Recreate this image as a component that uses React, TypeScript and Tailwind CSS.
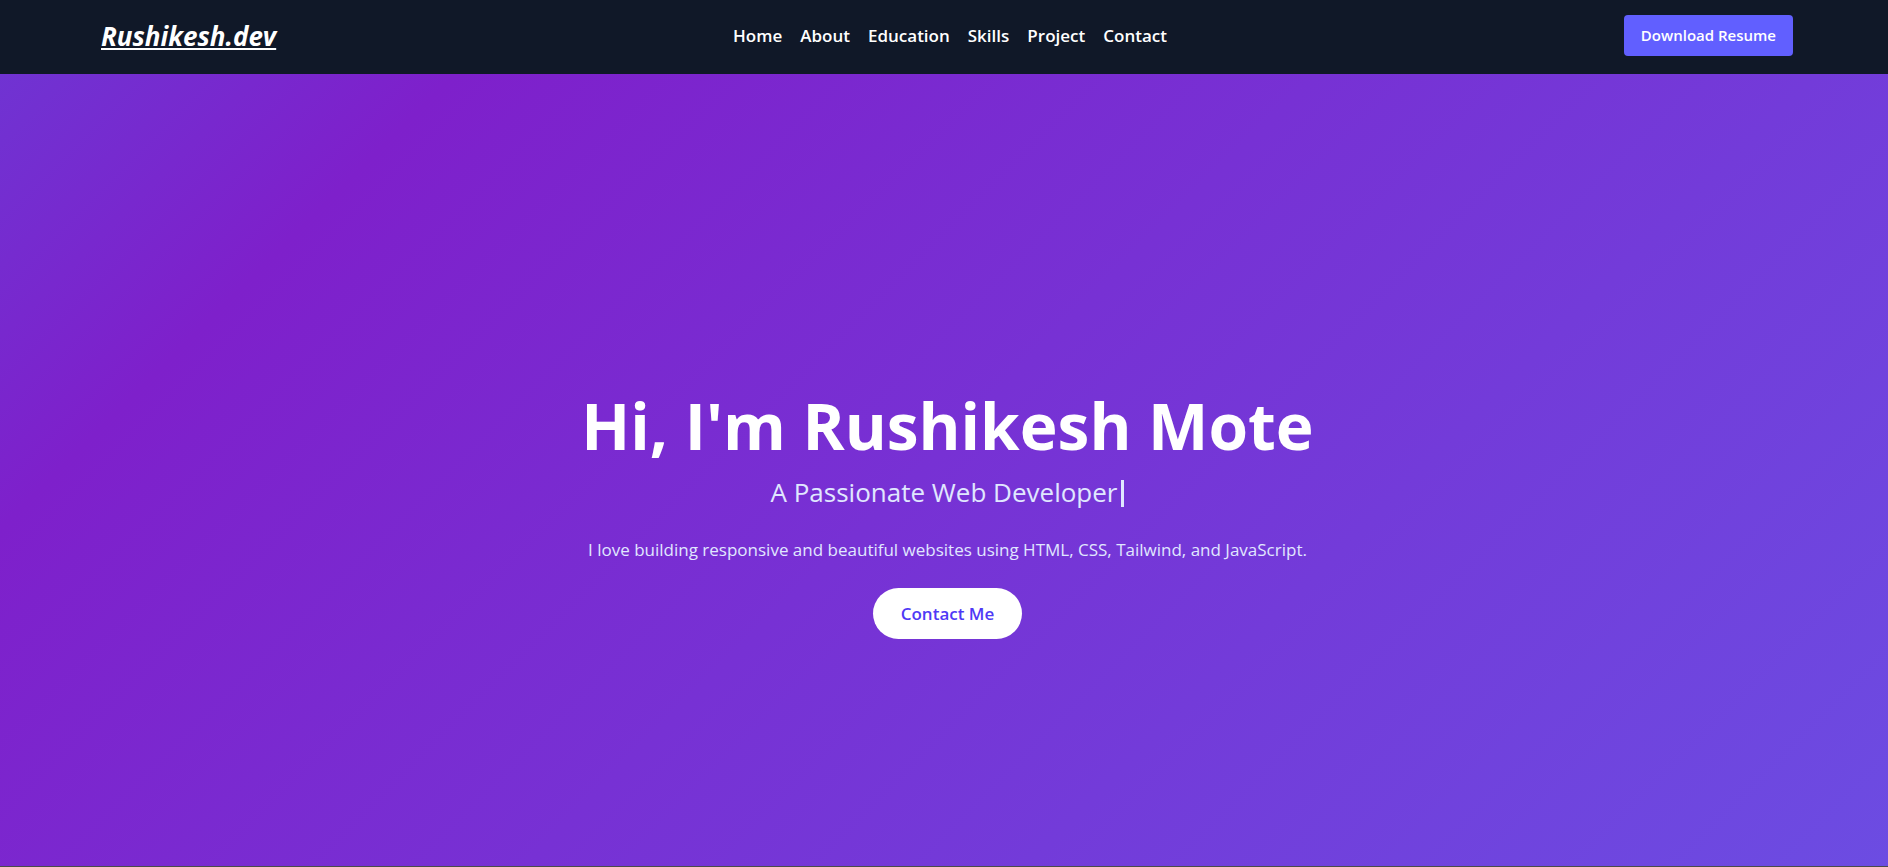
const links = ["Home", "About", "Education", "Skills", "Project", "Contact"];

function Header() {
  return (
    <header className="flex items-center justify-between bg-[#101828] pt-[15px] pr-[95px] pb-[18px] pl-[101px] text-white">
      <a href="#home" className="text-[26px] leading-8 font-bold italic underline decoration-2 underline-offset-2">
        Rushikesh.dev
      </a>
      <nav aria-label="Main" className="flex gap-[18px] text-[17px] leading-7 font-semibold">
        {links.map((link) => (
          <a key={link} href={`#${link.toLowerCase()}`}>
            {link}
          </a>
        ))}
      </nav>
      <button type="button" className="rounded-[4px] bg-[#615fff] px-[17px] py-2 text-[15px] leading-[25px] font-semibold">
        Download Resume
      </button>
    </header>
  );
}

function Hero() {
  return (
    <main
      id="home"
      className="flex grow flex-col items-center justify-center border-b border-[#4a4a4a] bg-[linear-gradient(135deg,#7033d2_0%,#7e20cb_17%,#6c4ce2_100%)] pt-[88px] pl-[7px] text-center text-white"
    >
      <h1 className="text-[64px] leading-[72px] font-bold">Hi, I'm Rushikesh Mote</h1>
      <p className="mt-3 flex items-end text-[26px] leading-9 text-[#e0e7ff]">
        A Passionate Web Developer
        <span aria-hidden="true" className="mb-[3px] ml-1 h-[27px] w-[3px] bg-[#e0e7ff]" />
      </p>
      <p className="mt-[26px] text-[17px] leading-7 text-[#e0e7ff]">
        I love building responsive and beautiful websites using HTML, CSS, Tailwind, and JavaScript.
      </p>
      <a href="#contact" className="mt-6 rounded-full bg-white px-7 py-3 text-[17px] leading-[27px] font-semibold text-[#4f39f6]">
        Contact Me
      </a>
    </main>
  );
}

export default function App() {
  return (
    <div className="flex min-h-screen flex-col font-['Open_Sans','Noto_Sans',sans-serif]">
      <Header />
      <Hero />
    </div>
  );
}
